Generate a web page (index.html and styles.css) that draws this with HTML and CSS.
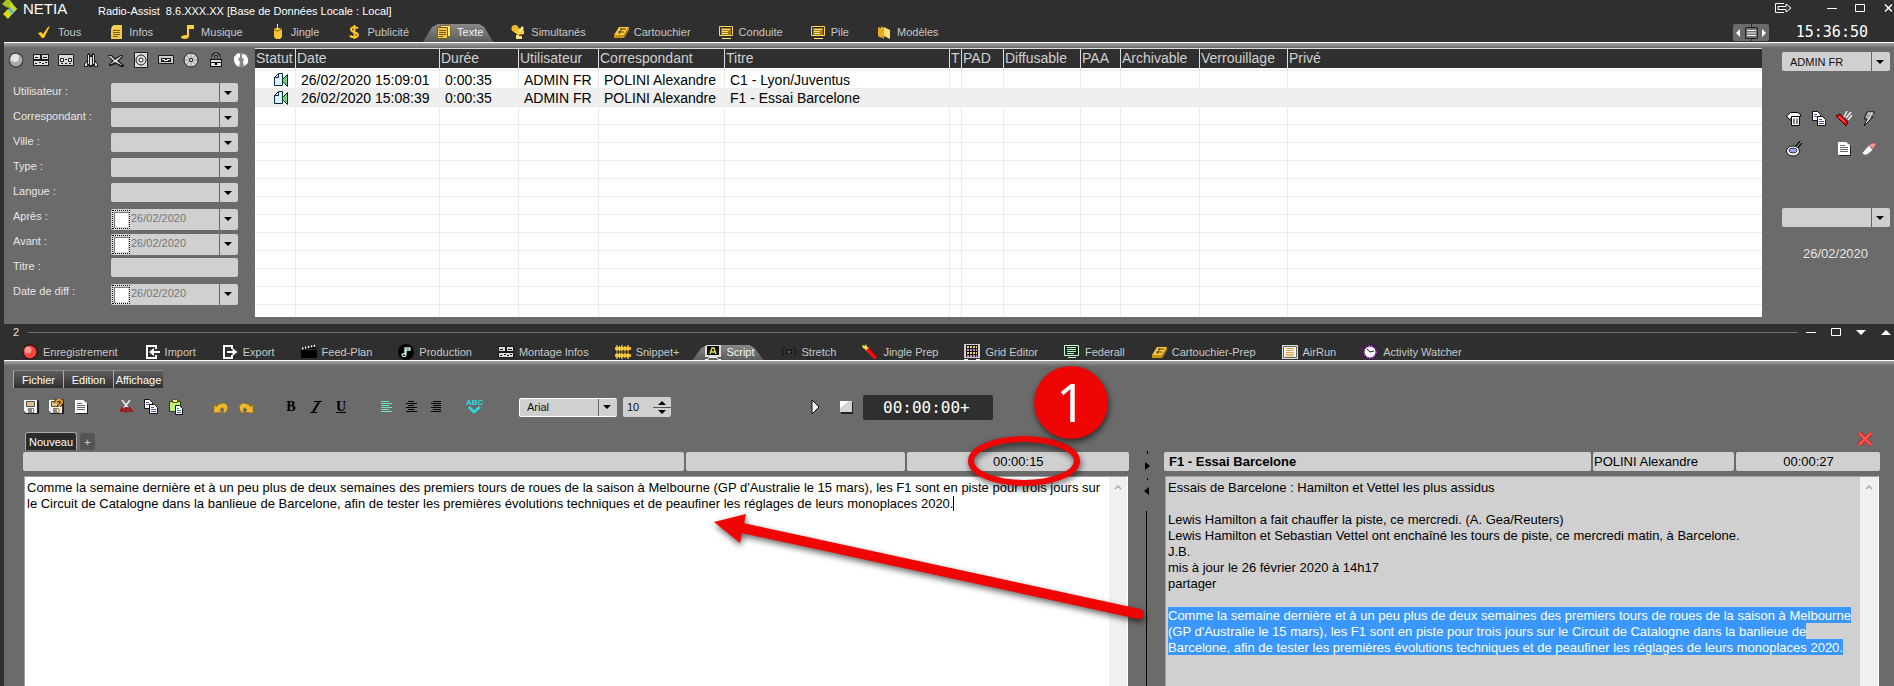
FILE: index.html
```
<!DOCTYPE html>
<html lang="fr">
<head>
  <meta charset="UTF-8" />
  <meta name="viewport" content="width=device-width, initial-scale=1.0"/>
  <title>Netia - Radio-Assist</title>
  <link rel="stylesheet" href="styles.css">
</head>
<body>

<!-- Icon sprite -->
<svg class="sprite" aria-hidden="true">
  <symbol id="i-check" viewBox="0 0 16 16"><path d="M1 9l4 5h2l6-12-2 1-5 7-2-2z" fill="#ffc726"/></symbol>
  <symbol id="i-sheet" viewBox="0 0 16 16"><path d="M6 1h8v14H3V5z" fill="#f4c945"/><path d="M3 4l3-3v3z" fill="#ffe89a"/><path d="M5 6.500h7M5 8.500h7M5 10.500h7M5 12.500h5" stroke="#7a5c10"/></symbol>
  <symbol id="i-note" viewBox="0 0 16 16"><path d="M7 1h7v4H9v7c0 2-2 3-4 3s-4-1-4-2 2-2 6-2z" fill="#ffcf3f"/></symbol>
  <symbol id="i-candle" viewBox="0 0 16 16"><path d="M7 0h1v4h-1z" fill="#ffe89a"/><path d="M4 5l2-1h3l3 1v8l-2 2H6l-2-2z" fill="#f7c52d"/><path d="M4 6l4 1 4-2" stroke="#8a6a10" fill="none"/></symbol>
  <symbol id="i-dollar" viewBox="0 0 16 16"><path d="M12 4.500C11 3 5 2.500 5 5.500S12 8 12 11s-7 2.500-8 .5M8.500 1v14" stroke="#ffc726" stroke-width="2" fill="none"/></symbol>
  <symbol id="i-sheets" viewBox="0 0 16 16"><path d="M4.500 1.500h10v11h-10z" fill="#ffe9a0" stroke="#8a6a10"/><path d="M1.500 3.500h10v11h-10z" fill="#f2c540" stroke="#7a5c10"/><path d="M3 6.500h7M3 8.500h7M3 10.500h7M3 12.500h4" stroke="#7a5c10"/></symbol>
  <symbol id="i-dish" viewBox="0 0 16 16"><path d="M4 5l8-1 2 3v3l-6 1-4-3z" fill="#ffcf3f"/><circle cx="5" cy="4.500" r="3.500" fill="#f0bb28"/><path d="M12 2l2 2-4 4-1-1z" fill="#fff0a0"/><path d="M6 11h3v1h3v3H6z" fill="#ffe07a"/></symbol>
  <symbol id="i-cart" viewBox="0 0 16 16"><path d="M6 3h10l-5 8H1z" fill="#f7c845"/><path d="M1 11h10l5-8v3l-5 8H1z" fill="#c98d10"/><path d="M7 5h6M5 8h6M9 4l-3 6" stroke="#5a4008"/></symbol>
  <symbol id="i-screen" viewBox="0 0 16 16"><path d="M1.500 2.500h13v9h-13z" fill="none" stroke="#ffd95a"/><path d="M3 4h10v7H3z" fill="#a27a16"/><path d="M4 5.500h8M4 7.500h6M4 9.500h6M4 14.500h9" stroke="#ffe07a"/></symbol>
  <symbol id="i-books" viewBox="0 0 16 16"><path d="M2 3l3 1v10l-3-2zM5 2l3 2v11l-3-2z" fill="#e8a820"/><path d="M8 3l6 3v9l-6-3z" fill="#ffe07a"/></symbol>

  <symbol id="i-ball" viewBox="0 0 16 16"><circle cx="8" cy="8" r="7.500" fill="#333"/><circle cx="8" cy="8" r="6.500" fill="#aaa"/><circle cx="7" cy="6" r="4" fill="#e4e4e4"/></symbol>
  <symbol id="i-mixer" viewBox="0 0 16 16"><path d="M0 2h16v12H0z" fill="#1c1c1c"/><path d="M1 3h6v4H1zM9 3h6v4H9zM1 9h14v4H1z" fill="#dcdcdc"/><path d="M2 5.500h3M10 5.500h4M2 11.500h2M6 10.500h2M9 11.500h2M12 10.500h2" stroke="#1c1c1c"/></symbol>
  <symbol id="i-tape" viewBox="0 0 16 16"><path d="M0 3l1-1h14l1 1v11H0z" fill="#1c1c1c"/><path d="M1 3h14v10H1z" fill="#d8d8d8"/><path d="M2.500 6.500h3v3h-3zM10.500 6.500h3v3h-3z" fill="#fff" stroke="#1c1c1c"/><path d="M7 7.500h2M3 11.500h2M7 11.500h2M11 11.500h2" stroke="#1c1c1c"/></symbol>
  <symbol id="i-rocket" viewBox="0 0 16 16"><path d="M1 12l3-4V3l2-2 1 1 1 2 1-2 1-1 2 2v5l3 4v3h-3l-2-1-1 1H7l-1-1-2 1H1z" fill="#1c1c1c"/><path d="M5 3h1v9H5zM10 3h1v9h-1zM7 5h2v8H7zM2 12l2-2v4H2zM14 12l-2-2v4h2z" fill="#e4e4e4"/></symbol>
  <symbol id="i-plane" viewBox="0 0 16 16"><path d="M0 3l4 0 3 3 6-3h2v2l-4 4 5 4v2h-3l-5-3-5 2H1v-2l3-3z" fill="#1c1c1c"/><path d="M1 4h2l4 4 6-4h1l-5 5 5 4h-1l-6-3-4 2H2l4-3z" fill="#e4e4e4"/></symbol>
  <symbol id="i-speaker" viewBox="0 0 16 16"><path d="M1.500.5h13v15h-13z" fill="#dcdcdc" stroke="#222"/><circle cx="8" cy="8" r="5" fill="none" stroke="#222"/><circle cx="8" cy="8" r="2" fill="#fff" stroke="#222"/></symbol>
  <symbol id="i-deck" viewBox="0 0 16 16"><path d="M.5 3.500h15v8H.5z" fill="#ccc" stroke="#1c1c1c"/><path d="M3 6h10v4H3z" fill="#1c1c1c"/><path d="M4 7.500h3M9 7.500h3M6 8.500h4" stroke="#eee"/></symbol>
  <symbol id="i-disc" viewBox="0 0 16 16"><circle cx="8" cy="8" r="7" fill="#d4d4d4" stroke="#222"/><path d="M8 2v12M2 8h12M4 4l8 8M12 4l-8 8" stroke="#999"/><circle cx="8" cy="8" r="2" fill="#222"/><circle cx="8" cy="8" r="1" fill="#fff"/></symbol>
  <symbol id="i-lock" viewBox="0 0 16 16"><path d="M5 8V5c0-4 6-4 6 0v3" fill="none" stroke="#111" stroke-width="3"/><path d="M5 8V5c0-4 6-4 6 0v3" fill="none" stroke="#ccc"/><path d="M2 7h12v8H2z" fill="#111"/><path d="M3 8h10v2H3zM3 11h10v3H3z" fill="#dedede"/><path d="M7 10h2v3H7z"/></symbol>
  <symbol id="i-globe" viewBox="0 0 16 16"><circle cx="8" cy="8" r="7.500" fill="#888"/><path d="M1 5l4-4 2 1v3L5 7l2 3-1 5-3-2-2-4zM9 2l4 1 2 4v4l-4 3-1-4 1-3-2-1z" fill="#fff"/></symbol>
  <symbol id="i-status" viewBox="0 0 16 16"><path d="M1.500 5.500l4-4h4v12h-8z" fill="#d8f0ff" stroke="#0c2c40"/><path d="M5.500 2v3.500h-4" fill="none" stroke="#0c2c40"/><path d="M9.500 6.500h1l4-4v12l-4-4h-1z" fill="#78c888" stroke="#062c10"/></symbol>

  <symbol id="i-trash" viewBox="0 0 16 16"><path d="M5.500 5.500h8v9h-8z" fill="#fff" stroke="#000"/><path d="M.5 5l4-3.500h7l3 2v2h-9l-1 4z" fill="#fff" stroke="#000"/><path d="M8 7.500v5.500M11 7.500v5.500" stroke="#000"/></symbol>
  <symbol id="i-copy" viewBox="0 0 16 16"><path d="M1.500.5h5l3 3v6h-8z" fill="#fff" stroke="#111"/><path d="M3 3.500h3M3 5.500h5" stroke="#5050b0"/><path d="M6.500 5.500h5l3 3v6h-8z" fill="#fff" stroke="#111"/><path d="M8 8.500h3M8 10.500h5M8 12.500h5" stroke="#5050b0"/></symbol>
  <symbol id="i-knife" viewBox="0 0 16 16"><path d="M10 7l5-6M8 6l3-6M12 9l4-5" stroke="#eee" stroke-width="1.500"/><path d="M0 5l4-2 8 8-2 4z" fill="#e00c0c" stroke="#400"/><path d="M3 6l6 5" stroke="#ff8a8a"/></symbol>
  <symbol id="i-bolt" viewBox="0 0 16 16"><path d="M6 1h8L9 6h3L3 15l3-7H3z" fill="#aaa" stroke="#111"/><path d="M7 2h5L5 12" stroke="#eee" fill="none"/></symbol>
  <symbol id="i-search" viewBox="0 0 16 16"><path d="M10 7l5-6" stroke="#111" stroke-width="4"/><path d="M10 7l5-6" stroke="#bbb"/><ellipse cx="7" cy="10" rx="6.500" ry="5" fill="#fff" stroke="#111"/><ellipse cx="7" cy="9.500" rx="4" ry="2.500" fill="#9aa6e8" stroke="#334"/></symbol>
  <symbol id="i-doc" viewBox="0 0 16 16"><path d="M3 2h8l4 3v10H3z" fill="#222"/><path d="M2 1h8l4 3v10H2z" fill="#fff"/><path d="M4 4.500h5M4 6.500h8M4 8.500h8M4 10.500h8" stroke="#666"/></symbol>
  <symbol id="i-eraser" viewBox="0 0 16 16"><path d="M8 4l3-2h3l1 2-4 5z" fill="#f29a92" stroke="#a55"/><path d="M8 4l4 5-6 5H3l-2-2z" fill="#f6f6f6" stroke="#777"/></symbol>

  <symbol id="i-rec" viewBox="0 0 16 16"><circle cx="8" cy="8" r="7.500" fill="#2a0606"/><circle cx="8" cy="8" r="6.500" fill="#f0443c"/><circle cx="6" cy="6" r="3.500" fill="#ff9a90"/></symbol>
  <symbol id="i-import" viewBox="0 0 16 16"><path d="M12 5V2H3v12h9v-3" fill="none" stroke="#fff" stroke-width="2"/><path d="M7 8h9" stroke="#fff" stroke-width="2"/><path d="M5 8l5-4v8z" fill="#fff"/></symbol>
  <symbol id="i-export" viewBox="0 0 16 16"><path d="M10 5V2H2v12h8v-3" fill="none" stroke="#fff" stroke-width="2"/><path d="M5 8h7" stroke="#fff" stroke-width="2"/><path d="M15.500 8l-5-4v8z" fill="#fff"/></symbol>
  <symbol id="i-clap" viewBox="0 0 16 16"><path d="M0 6h16v8H0z"/><path d="M1 4l14-2v3H1z"/><path d="M1 4.500l14-3" stroke="#fff" stroke-width="2" stroke-dasharray="1.500 1.500"/></symbol>
  <symbol id="i-prod" viewBox="0 0 16 16"><circle cx="8" cy="8" r="8"/><path d="M7 4h5v2H8v5c0 2-4 2-4 0s3-1 3-1z" fill="none" stroke="#c8f0dc" stroke-width="1.300"/></symbol>
  <symbol id="i-snippet" viewBox="0 0 16 16"><path d="M0 4.500h16M0 11.500h16" stroke="#f0b92c" stroke-width="3"/><path d="M2 1v14M4.500 2v12M7 1v14M10 2v12M13 1v14" stroke="#ffd24a" stroke-width="1.300"/><path d="M0 8h16" stroke="#3a2c08"/></symbol>
  <symbol id="i-script" viewBox="0 0 16 16"><path d="M0 0h16v13H0z" fill="#ddd"/><path d="M2 2h12v9H2z" fill="#111"/><path d="M5 10l2-6h2l2 6M6 8h4" fill="none" stroke="#e6e04a" stroke-width="1.300"/><path d="M0 15.500h3l1-2h8l1 2h3" stroke="#eee" fill="none"/></symbol>
  <symbol id="i-stretch" viewBox="0 0 16 16"><path d="M3 4l-2 4 2 4M13 4l2 4-2 4M6 5v6M10 5v6M8 6v1M8 9v1" fill="none" stroke="#0c0c0c" stroke-width="1.300" stroke-dasharray="2 1"/><path d="M7 8h2" stroke="#999"/></symbol>
  <symbol id="i-marker" viewBox="0 0 16 16"><path d="M4 4l3-1 8 9-1 3-2 0-8-8z" fill="#e81410"/><path d="M7 4l8 9" stroke="#600"/><path d="M0 1l3 1 1-2 1 3 2 1-2 1-1 2-1-2-2-1z" fill="#ffe640"/></symbol>
  <symbol id="i-grid" viewBox="0 0 16 16"><path d="M0 0h16v14H0z" fill="#d0d0d0"/><path d="M2 1h12v12H2z" fill="#111"/><path d="M3 3h10M3 9h10" stroke="#e8e060" stroke-width="2" stroke-dasharray="2 1"/><path d="M3 6h10M3 12h10" stroke="#d89ac0" stroke-width="2" stroke-dasharray="2 1"/><path d="M0 15.500h4M12 15.500h4" stroke="#eee"/></symbol>
  <symbol id="i-fed" viewBox="0 0 16 16"><path d="M.5 1.500h14v10H.5z" fill="#143018" stroke="#d8f4dc"/><path d="M3 3.500h9M3 5.500h9M3 7.500h9M3 9.500h7M4 13.500h8" stroke="#bdf0c4"/></symbol>
  <symbol id="i-airrun" viewBox="0 0 16 16"><path d="M0 1h16v14H0z" fill="#ddd"/><path d="M1.500 2.500h13v11h-13z" fill="#fff" stroke="#666"/><path d="M4 4.500h8M4 6.500h8M4 8.500h8M4 10.500h8M4 12h8" stroke="#e89a3c"/></symbol>
  <symbol id="i-watch" viewBox="0 0 16 16"><circle cx="8" cy="8" r="7.500" fill="#3a0c4a"/><circle cx="8" cy="8" r="6.300" fill="none" stroke="#c050e0" stroke-dasharray="2 1"/><circle cx="8" cy="8" r="5.500" fill="#f4f4ff"/><path d="M5 5l3 3 4-1" stroke="#222" fill="none"/></symbol>

  <symbol id="i-save" viewBox="0 0 16 16"><path d="M1 1h14l1 2v12H3l-2-2z" fill="#222"/><path d="M1 1h13v13H3l-2-2z" fill="#f0f0f0"/><path d="M3.500 2.500h8v5h-8z" fill="#d9bf80" stroke="#555"/><path d="M5 9h6v5H5z" fill="#888"/><path d="M9 10h1v3H9z" fill="#fff"/></symbol>
  <symbol id="i-saveas" viewBox="0 0 16 16"><use href="#i-save"/><path d="M8 4c0-4 6-4 6-1 0 2-3 2-3 5" fill="none" stroke="#3a2606" stroke-width="4"/><path d="M8 4c0-4 6-4 6-1 0 2-3 2-3 5M11 10v3" fill="none" stroke="#f0a41c" stroke-width="2"/></symbol>
  <symbol id="i-cut" viewBox="0 0 16 16"><path d="M4 1l6 8M12 1L6 9" stroke="#eee" stroke-width="1.500"/><path d="M2 13l2-4 2 4M2 12h4M7 13V9h3v4M12 13V9l3 4M8 8v6" fill="none" stroke="#a01414" stroke-width="1.500"/></symbol>
  <symbol id="i-paste" viewBox="0 0 16 16"><path d="M1.500 2.500h11v10h-11z" fill="#bff070" stroke="#24400c"/><path d="M4.500.5h5v3h-5z" fill="#ffe860" stroke="#553"/><path d="M7.500 6.500h4l3 3v6h-7z" fill="#fff" stroke="#111"/><path d="M9 9.500h2M9 11.500h4M9 13.500h4" stroke="#3a8ac0"/></symbol>
  <symbol id="i-undo" viewBox="0 0 16 16"><path d="M1 5v9l8-1-2-2c2-4 5-2 3 3h2c6-6 1-13-7-8L3 8z" fill="#edb62c" stroke="#8a6410" stroke-width=".5"/></symbol>
  <symbol id="i-spell" viewBox="0 0 16 16"><path d="M3 8l5 5 6-5" fill="none" stroke="#28dce4" stroke-width="2.500"/></symbol>
  <symbol id="i-italic" viewBox="0 0 16 16"><path d="M6 2.500h8M2 13.500h7" stroke="#000"/><path d="M11 3L5 13" stroke="#000" stroke-width="2"/></symbol>
  <symbol id="i-left" viewBox="0 0 16 16"><path d="M3 2.500h8M3 4.500h11M3 6.500h8M3 8.500h11M3 10.500h8M3 12.500h11" stroke="currentColor"/></symbol>
  <symbol id="i-center" viewBox="0 0 16 16"><path d="M5 2.500h6M3 4.500h11M5 6.500h6M3 8.500h11M5 10.500h6M3 12.500h11" stroke="currentColor"/></symbol>
  <symbol id="i-right" viewBox="0 0 16 16"><path d="M5 2.500h8M3 4.500h10M5 6.500h8M3 8.500h10M5 10.500h8M3 12.500h10" stroke="currentColor"/></symbol>
  <symbol id="i-play" viewBox="0 0 16 16"><path d="M4 1l7 7-7 7z" fill="#f4f4f4" stroke="#111"/></symbol>
  <symbol id="i-stop" viewBox="0 0 16 16"><path d="M3 3h12v12H3z" fill="#222"/><path d="M2 2h12v11H2z" fill="#d4d4d4"/><path d="M2 2h9L2 9z" fill="#fff"/></symbol>
  <symbol id="i-cross" viewBox="0 0 16 16"><path d="M2 2l12 12M14 2L2 14" stroke="#b02020" stroke-width="4.500"/><path d="M2 2l12 12M14 2L2 14" stroke="#f4554c" stroke-width="3"/></symbol>

  <symbol id="i-exit" viewBox="0 0 18 12"><path d="M10 1.500H1.500v9H10M4 4.500h8V2l5 4-5 4V7.500H4z" fill="none" stroke="#fff"/></symbol>
  <symbol id="i-min" viewBox="0 0 12 12"><path d="M1 6.500h10" stroke="#fff"/></symbol>
  <symbol id="i-max" viewBox="0 0 12 12"><path d="M1.500 2.500h9v7h-9z" fill="none" stroke="#fff"/></symbol>
  <symbol id="i-close" viewBox="0 0 12 12"><path d="M3 2.500l7 7M10 2.500l-7 7" stroke="#fff" stroke-width="1.500"/></symbol>
  <symbol id="i-down" viewBox="0 0 12 12"><path d="M1 4h10L6 9z" fill="#fff"/></symbol>
  <symbol id="i-up" viewBox="0 0 12 12"><path d="M1 9h10L6 4z" fill="#fff"/></symbol>
  <symbol id="i-chevron" viewBox="0 0 12 12"><path d="M3 8l3-3 3 3" fill="none" stroke="#aaa" stroke-width="1.500"/></symbol>
</svg>

<section class="browser">
  <header class="titlebar">
    <svg class="logo" viewBox="0 0 16 20"><path d="M1 4l4-4h4l3 4-4 4-3-1z" fill="#a9c51c"/><path d="M8 8l3-4 5 5-5 6-4-5z" fill="#58b7c4"/><path d="M10 2l6 7-3 3-5-6z" fill="#c8d830"/><path d="M2 14l5-5 4 5-4 5z" fill="#d3dd22"/></svg>
    <span class="brand">NETIA</span>
    <h1 class="title">Radio-Assist  8.6.XXX.XX [Base de Données Locale : Local]</h1>
    <div class="window-buttons">
      <button class="icon-btn exit" aria-label="Quitter"><svg><use href="#i-exit"/></svg></button>
      <button class="icon-btn" aria-label="Réduire"><svg><use href="#i-min"/></svg></button>
      <button class="icon-btn" aria-label="Agrandir"><svg><use href="#i-max"/></svg></button>
      <button class="icon-btn" aria-label="Fermer"><svg><use href="#i-close"/></svg></button>
    </div>
  </header>

  <nav class="tabs">
    <button class="tab"><svg><use href="#i-check"/></svg>Tous</button>
    <button class="tab"><svg><use href="#i-sheet"/></svg>Infos</button>
    <button class="tab"><svg><use href="#i-note"/></svg>Musique</button>
    <button class="tab"><svg><use href="#i-candle"/></svg>Jingle</button>
    <button class="tab"><svg><use href="#i-dollar"/></svg>Publicité</button>
    <button class="tab active"><svg><use href="#i-sheets"/></svg>Texte</button>
    <button class="tab"><svg><use href="#i-dish"/></svg>Simultanés</button>
    <button class="tab"><svg><use href="#i-cart"/></svg>Cartouchier</button>
    <button class="tab"><svg><use href="#i-screen"/></svg>Conduite</button>
    <button class="tab"><svg><use href="#i-screen"/></svg>Pile</button>
    <button class="tab"><svg><use href="#i-books"/></svg>Modèles</button>
    <div class="clock-area">
      <button class="pager" aria-label="Défilement"><svg viewBox="0 0 36 17"><path d="M0 2q0-2 2-2h32q2 0 2 2v13q0 2-2 2H2q-2 0-2-2z" fill="#6b6b6b"/><path d="M7 5v8L3 9zM29 5v8l4-4z" fill="#fff"/><path d="M18.500 0v17" stroke="#333"/><path d="M12.500 3.500h12v11h-12z" fill="#6b6b6b" stroke="#222"/><path d="M14 6.500h9M14 9h9M14 11.500h9" stroke="#fff"/></svg></button>
      <time class="clock">15:36:50</time>
    </div>
  </nav>

  <div class="panel browser-panel">
    <form class="filters">
      <div class="filter-icons">
        <svg><use href="#i-ball"/></svg>
        <svg><use href="#i-mixer"/></svg>
        <svg><use href="#i-tape"/></svg>
        <svg><use href="#i-rocket"/></svg>
        <svg><use href="#i-plane"/></svg>
        <svg><use href="#i-speaker"/></svg>
        <svg><use href="#i-deck"/></svg>
        <svg><use href="#i-disc"/></svg>
        <svg><use href="#i-lock"/></svg>
        <svg><use href="#i-globe"/></svg>
      </div>
      <div class="filter-row"><label for="utilisateur">Utilisateur :</label><select id="utilisateur" class="field combo"></select></div>
      <div class="filter-row"><label for="correspondant">Correspondant :</label><select id="correspondant" class="field combo"></select></div>
      <div class="filter-row"><label for="ville">Ville :</label><select id="ville" class="field combo"></select></div>
      <div class="filter-row"><label for="type">Type :</label><select id="type" class="field combo"></select></div>
      <div class="filter-row"><label for="langue">Langue :</label><select id="langue" class="field combo"></select></div>
      <div class="filter-row"><label for="apres">Après :</label>
        <div class="field combo date"><input type="checkbox" aria-label="Activer Après"><input type="text" id="apres" value="26/02/2020"></div></div>
      <div class="filter-row"><label for="avant">Avant :</label>
        <div class="field combo date"><input type="checkbox" aria-label="Activer Avant"><input type="text" id="avant" value="26/02/2020"></div></div>
      <div class="filter-row"><label for="titre">Titre :</label><input type="text" id="titre" class="field"></div>
      <div class="filter-row"><label for="diff">Date de diff :</label>
        <div class="field combo date"><input type="checkbox" aria-label="Activer Date de diff"><input type="text" id="diff" value="26/02/2020"></div></div>
    </form>

    <div class="table-wrap">
      <table class="items">
        <colgroup>
          <col class="c-statut"><col class="c-date"><col class="c-duree"><col class="c-user"><col class="c-corr"><col class="c-titre"><col class="c-t"><col class="c-pad"><col class="c-diff"><col class="c-paa"><col class="c-arch"><col class="c-verr"><col>
        </colgroup>
        <thead>
          <tr><th>Statut</th><th>Date</th><th>Durée</th><th>Utilisateur</th><th>Correspondant</th><th>Titre</th><th>T</th><th>PAD</th><th>Diffusable</th><th>PAA</th><th>Archivable</th><th>Verrouillage</th><th>Privé</th></tr>
        </thead>
        <tbody>
          <tr><td class="status"><svg><use href="#i-status"/></svg></td><td>26/02/2020 15:09:01</td><td>0:00:35</td><td>ADMIN FR</td><td>POLINI Alexandre</td><td>C1 - Lyon/Juventus</td><td></td><td></td><td></td><td></td><td></td><td></td><td></td></tr>
          <tr class="current"><td class="status"><svg><use href="#i-status"/></svg></td><td>26/02/2020 15:08:39</td><td>0:00:35</td><td>ADMIN FR</td><td>POLINI Alexandre</td><td>F1 - Essai Barcelone</td><td></td><td></td><td></td><td></td><td></td><td></td><td></td></tr>
          <tr><td></td><td></td><td></td><td></td><td></td><td></td><td></td><td></td><td></td><td></td><td></td><td></td><td></td></tr>
          <tr><td></td><td></td><td></td><td></td><td></td><td></td><td></td><td></td><td></td><td></td><td></td><td></td><td></td></tr>
          <tr><td></td><td></td><td></td><td></td><td></td><td></td><td></td><td></td><td></td><td></td><td></td><td></td><td></td></tr>
          <tr><td></td><td></td><td></td><td></td><td></td><td></td><td></td><td></td><td></td><td></td><td></td><td></td><td></td></tr>
          <tr><td></td><td></td><td></td><td></td><td></td><td></td><td></td><td></td><td></td><td></td><td></td><td></td><td></td></tr>
          <tr><td></td><td></td><td></td><td></td><td></td><td></td><td></td><td></td><td></td><td></td><td></td><td></td><td></td></tr>
          <tr><td></td><td></td><td></td><td></td><td></td><td></td><td></td><td></td><td></td><td></td><td></td><td></td><td></td></tr>
          <tr><td></td><td></td><td></td><td></td><td></td><td></td><td></td><td></td><td></td><td></td><td></td><td></td><td></td></tr>
          <tr><td></td><td></td><td></td><td></td><td></td><td></td><td></td><td></td><td></td><td></td><td></td><td></td><td></td></tr>
          <tr><td></td><td></td><td></td><td></td><td></td><td></td><td></td><td></td><td></td><td></td><td></td><td></td><td></td></tr>
          <tr><td></td><td></td><td></td><td></td><td></td><td></td><td></td><td></td><td></td><td></td><td></td><td></td><td></td></tr>
          <tr><td></td><td></td><td></td><td></td><td></td><td></td><td></td><td></td><td></td><td></td><td></td><td></td><td></td></tr>
        </tbody>
      </table>
    </div>

    <aside class="side">
      <select class="field combo" aria-label="Utilisateur connecté"><option>ADMIN FR</option></select>
      <div class="side-tools">
        <button class="icon-btn" aria-label="Supprimer"><svg><use href="#i-trash"/></svg></button>
        <button class="icon-btn" aria-label="Copier"><svg><use href="#i-copy"/></svg></button>
        <button class="icon-btn" aria-label="Outils"><svg><use href="#i-knife"/></svg></button>
        <button class="icon-btn" aria-label="Envoyer"><svg><use href="#i-bolt"/></svg></button>
        <button class="icon-btn" aria-label="Rechercher"><svg><use href="#i-search"/></svg></button>
        <span></span>
        <button class="icon-btn" aria-label="Fiche"><svg><use href="#i-doc"/></svg></button>
        <button class="icon-btn" aria-label="Effacer"><svg><use href="#i-eraser"/></svg></button>
      </div>
      <select class="field combo" aria-label="Filtre"></select>
      <time class="side-date">26/02/2020</time>
    </aside>
  </div>
</section>

<section class="workspace">
  <div class="separator">
    <span>2</span>
    <hr>
    <div class="window-buttons">
      <button class="icon-btn" aria-label="Réduire"><svg><use href="#i-min"/></svg></button>
      <button class="icon-btn" aria-label="Agrandir"><svg><use href="#i-max"/></svg></button>
      <button class="icon-btn" aria-label="Descendre"><svg><use href="#i-down"/></svg></button>
      <button class="icon-btn" aria-label="Monter"><svg><use href="#i-up"/></svg></button>
    </div>
  </div>

  <nav class="tabs modules">
    <button class="tab"><svg><use href="#i-rec"/></svg>Enregistrement</button>
    <button class="tab"><svg><use href="#i-import"/></svg>Import</button>
    <button class="tab"><svg><use href="#i-export"/></svg>Export</button>
    <button class="tab"><svg><use href="#i-clap"/></svg>Feed-Plan</button>
    <button class="tab"><svg><use href="#i-prod"/></svg>Production</button>
    <button class="tab"><svg><use href="#i-mixer"/></svg>Montage Infos</button>
    <button class="tab"><svg><use href="#i-snippet"/></svg>Snippet+</button>
    <button class="tab active"><svg><use href="#i-script"/></svg>Script</button>
    <button class="tab"><svg><use href="#i-stretch"/></svg>Stretch</button>
    <button class="tab"><svg><use href="#i-marker"/></svg>Jingle Prep</button>
    <button class="tab"><svg><use href="#i-grid"/></svg>Grid Editor</button>
    <button class="tab"><svg><use href="#i-fed"/></svg>Federall</button>
    <button class="tab"><svg><use href="#i-cart"/></svg>Cartouchier-Prep</button>
    <button class="tab"><svg><use href="#i-airrun"/></svg>AirRun</button>
    <button class="tab"><svg><use href="#i-watch"/></svg>Activity Watcher</button>
  </nav>

  <div class="panel script-panel">
    <div class="menubar">
      <button>Fichier</button>
      <button>Edition</button>
      <button>Affichage</button>
    </div>

    <div class="toolbar">
      <div class="tool-group">
        <button class="icon-btn" aria-label="Enregistrer"><svg><use href="#i-save"/></svg></button>
        <button class="icon-btn" aria-label="Enregistrer sous"><svg><use href="#i-saveas"/></svg></button>
        <button class="icon-btn" aria-label="Document"><svg><use href="#i-doc"/></svg></button>
      </div>
      <div class="tool-group">
        <button class="icon-btn" aria-label="Couper"><svg><use href="#i-cut"/></svg></button>
        <button class="icon-btn" aria-label="Copier"><svg><use href="#i-copy"/></svg></button>
        <button class="icon-btn" aria-label="Coller"><svg><use href="#i-paste"/></svg></button>
      </div>
      <div class="tool-group">
        <button class="icon-btn" aria-label="Annuler"><svg><use href="#i-undo"/></svg></button>
        <button class="icon-btn flip" aria-label="Rétablir"><svg><use href="#i-undo"/></svg></button>
      </div>
      <div class="tool-group letters">
        <button class="icon-btn">B</button>
        <button class="icon-btn" aria-label="Italique"><svg><use href="#i-italic"/></svg></button>
        <button class="icon-btn underline">U</button>
      </div>
      <div class="tool-group">
        <button class="icon-btn on" aria-label="Gauche"><svg><use href="#i-left"/></svg></button>
        <button class="icon-btn" aria-label="Centre"><svg><use href="#i-center"/></svg></button>
        <button class="icon-btn" aria-label="Droite"><svg><use href="#i-right"/></svg></button>
      </div>
      <button class="icon-btn spell"><span>ABC</span><svg><use href="#i-spell"/></svg></button>
      <select class="field combo font-name" aria-label="Police"><option>Arial</option></select>
      <input type="text" class="field font-size" aria-label="Taille" value="10">
      <div class="transport">
        <button class="icon-btn" aria-label="Lecture"><svg><use href="#i-play"/></svg></button>
        <button class="icon-btn" aria-label="Stop"><svg><use href="#i-stop"/></svg></button>
        <output class="counter">00:00:00+</output>
      </div>
    </div>

    <div class="panes">
      <div class="pane pane-edit">
        <div class="pane-tabs">
          <button class="doc-tab">Nouveau</button>
          <button class="add-tab">+</button>
        </div>
        <div class="info-bar">
          <div class="cell"></div>
          <div class="cell"></div>
          <div class="cell time">00:00:15</div>
        </div>
        <div class="editor">
          <textarea aria-label="Texte" spellcheck="false">Comme la semaine dernière et à un peu plus de deux semaines des premiers tours de roues de la saison à Melbourne (GP d'Australie le 15 mars), les F1 sont en piste pour trois jours sur le Circuit de Catalogne dans la banlieue de Barcelone, afin de tester les premières évolutions techniques et de peaufiner les réglages de leurs monoplaces 2020.</textarea>
          <div class="scroll"><svg><use href="#i-chevron"/></svg></div>
          <i class="caret"></i>
        </div>
      </div>

      <div class="splitter">
        <svg viewBox="0 0 12 60"><path d="M6.500 0v3M6.500 27v2" stroke="#000"/><path d="M4 11l5 4-5 4zM8 36l-5 4 5 4z"/></svg>
      </div>

      <div class="pane pane-source">
        <div class="pane-tabs">
          <button class="icon-btn" aria-label="Fermer le texte"><svg><use href="#i-cross"/></svg></button>
        </div>
        <div class="info-bar">
          <div class="cell name">F1 - Essai Barcelone</div>
          <div class="cell">POLINI Alexandre</div>
          <div class="cell time">00:00:27</div>
        </div>
        <div class="editor">
          <article class="source">
            <p>Essais de Barcelone : Hamilton et Vettel les plus assidus</p>
            <p>Lewis Hamilton a fait chauffer la piste, ce mercredi. (A. Gea/Reuters)<br>
            Lewis Hamilton et Sebastian Vettel ont enchaîné les tours de piste, ce mercredi matin, à Barcelone.<br>
            J.B.<br>
            mis à jour le 26 février 2020 à 14h17<br>
            partager</p>
            <p><mark>Comme la semaine dernière et à un peu plus de deux semaines des premiers tours de roues de la saison à Melbourne (GP d'Australie le 15 mars), les F1 sont en piste pour trois jours sur le Circuit de Catalogne dans la banlieue de Barcelone, afin de tester les premières évolutions techniques et de peaufiner les réglages de leurs monoplaces 2020.</mark></p>
          </article>
          <div class="scroll"><svg><use href="#i-chevron"/></svg></div>
        </div>
      </div>
    </div>
  </div>

  <!-- Callouts over the editor -->
  <svg class="arrow" viewBox="0 0 440 110">
    <path d="M36 14L433 100" stroke="#f00505" stroke-width="10" stroke-linecap="round"/>
    <path d="M8 8l32-8-6 29z" fill="#f00505"/>
  </svg>
  <svg class="ring" viewBox="0 0 112 50"><ellipse cx="56" cy="25" rx="53" ry="22" fill="none" stroke="#f00505" stroke-width="6"/></svg>
  <div class="step">1</div>
</section>

</body>
</html>
```
FILE: styles.css
```
* {
  margin: 0; padding: 0; box-sizing: border-box;
}

body {
  font-family: "Liberation Sans", Arial, sans-serif;
  font-size: 11px;
  line-height: 14px;
  background: #2f2f2f;
  color: #e6e6e6;
  height: 100vh;
  overflow: hidden;
  display: flex;
  flex-direction: column;
}

button, input, select, textarea {
  font: inherit;
  color: inherit;
  border: none;
  background: none;
  outline: none;
}

.sprite {
  position: absolute;
  width: 0;
  height: 0;
}

.icon-btn {
  display: block;
  width: 16px;
  height: 16px;
}

.icon-btn svg,
.tab svg,
.filter-icons svg,
.status svg {
  display: block;
  width: 16px;
  height: 16px;
}

/* Title bar */
.titlebar {
  display: flex;
  align-items: center;
  height: 22px;
  color: #fff;
}

.logo {
  width: 16px;
  height: 20px;
  margin: 0 6px 2px 1px;
}

.brand {
  width: 75px;
  font-size: 15px;
  padding-bottom: 4px;
}

.title {
  font-size: 11px;
  font-weight: normal;
  white-space: pre;
}

.window-buttons {
  display: flex;
  align-items: center;
  gap: 13px;
  margin-left: auto;
}

.window-buttons .icon-btn,
.window-buttons svg {
  width: 12px;
  height: 12px;
}

.titlebar .window-buttons {
  gap: 16px;
  padding-bottom: 6px;
}

.window-buttons .exit,
.window-buttons .exit svg {
  width: 18px;
}

.window-buttons .exit {
  margin-right: 18px;
}

/* Tabs */
.tabs {
  display: flex;
  height: 20px;
  padding-left: 24px;
}

.tab {
  display: flex;
  align-items: center;
  gap: 5px;
  padding: 0 14px 0 13px;
  color: #c8c8c8;
  white-space: nowrap;
}

.tab.active {
  color: #f4f4f4;
  background: linear-gradient(#8e8e8e, #5c5c5c);
  clip-path: polygon(0 100%, 9px 5px, 15px 2px, calc(100% - 18px) 2px, calc(100% - 13px) 5px, calc(100% - 4px) 100%);
}

.modules {
  padding: 3px 0 0 9px;
}

.modules .tab {
  padding-right: 13px;
}

.clock-area {
  display: flex;
  align-items: center;
  gap: 27px;
  margin-left: auto;
  padding-right: 26px;
}

.pager, .pager svg {
  display: block;
  width: 36px;
  height: 17px;
}

.clock, .counter {
  font-family: "DejaVu Sans Mono", monospace;
  font-size: 15px;
  color: #fff;
}

.panel {
  margin-left: 4px;
  background: linear-gradient(#fff 1px, #a4a4a4 1px, #6b6b6b 6px);
}

.browser-panel {
  display: flex;
  padding: 6px 0 7px;
}

/* Filters */
.filters {
  width: 251px;
  padding: 4px 0 0 4px;
}

.filter-icons {
  display: flex;
  gap: 9px;
  margin-bottom: 12px;
}

.filter-row {
  display: flex;
  align-items: center;
  height: 25px;
  padding-left: 5px;
}

.filter-row label {
  width: 98px;
  padding-bottom: 3px;
}

.field {
  width: 127px;
  height: 19px;
  border-radius: 2px;
  background: #d0d0d0;
  color: #111;
}

.combo {
  appearance: none;
  padding-left: 8px;
  background:
    url("data:image/svg+xml,%3Csvg xmlns='http://www.w3.org/2000/svg' width='8' height='4'%3E%3Cpath d='M0 0h8L4 4z'/%3E%3C/svg%3E") right 6px center no-repeat,
    linear-gradient(#666, #666) right 18px center / 1px 100% no-repeat,
    #d0d0d0;
}

.date {
  display: flex;
  align-items: center;
  height: 21px;
  margin-top: 3px;
  padding-left: 1px;
}

.date input[type="checkbox"] {
  appearance: none;
  width: 18px;
  height: 19px;
  border: 1px dotted #000;
  background: #fff;
  box-shadow: inset 1px 1px #d0d0d0, inset 2px 2px #777, inset -1px -1px #d0d0d0;
}

.date input[type="text"] {
  width: 80px;
  padding: 0 0 2px 1px;
  color: #777;
}

/* Items table */
.table-wrap {
  flex: 1;
  height: 269px;
  overflow: hidden;
  background: #fff;
}

.items {
  width: 100%;
  table-layout: fixed;
  border-collapse: separate;
  border-spacing: 0;
  font-size: 14px;
  line-height: 16px;
  color: #000;
}

.items th {
  height: 23px;
  padding: 0 0 3px 1px;
  border-left: 1px solid #ddd;
  background: linear-gradient(#ddd 1px, #2f2f2f 1px 20px, #fff 20px 22px, #ececec 22px);
  color: #d0d0d0;
  font-weight: normal;
  text-align: left;
  white-space: nowrap;
}

.items td {
  height: 18px;
  padding: 1px 0 0 5px;
  border-left: 1px solid #ececec;
  border-bottom: 1px solid #ececec;
  white-space: nowrap;
}

.items th:first-child,
.items td:first-child {
  border-left: none;
}

.items .current td {
  background: #efefef;
}

.items .status {
  padding-left: 18px;
}

.c-statut { width: 40px; }
.c-date { width: 144px; }
.c-duree { width: 79px; }
.c-user { width: 80px; }
.c-corr { width: 126px; }
.c-titre { width: 225px; }
.c-t { width: 12px; }
.c-pad { width: 42px; }
.c-diff { width: 77px; }
.c-paa { width: 40px; }
.c-arch { width: 79px; }
.c-verr { width: 88px; }

/* Right side */
.side {
  display: flex;
  flex-direction: column;
  width: 132px;
  padding: 4px 4px 0 20px;
}

.side .field {
  width: 100%;
}

.side-tools {
  display: grid;
  grid-template-columns: repeat(4, 16px);
  gap: 14px 9px;
  margin: 40px 0 51px 4px;
}

.side-date {
  margin: 20px 0 0 21px;
  font-size: 13px;
}

/* Workspace */
.workspace {
  flex: 1;
  position: relative;
  display: flex;
  flex-direction: column;
  min-height: 0;
}

.separator {
  display: flex;
  align-items: center;
  height: 16px;
  padding: 0 2px 0 13px;
}

.separator span {
  width: 15px;
}

.separator hr {
  flex: 1;
  border: none;
  border-top: 1px solid #707070;
}

.separator .window-buttons {
  margin-left: 7px;
}

.script-panel {
  flex: 1;
  display: flex;
  flex-direction: column;
  min-height: 0;
  padding: 10px 14px 0 19px;
}

.menubar {
  display: flex;
  margin-left: -10px;
}

.menubar button {
  width: 50px;
  height: 18px;
  border-left: 1px solid #aaa;
  border-top: 1px solid #888;
  background: linear-gradient(#5e5e5e, #303030);
  color: #fff;
}

.toolbar {
  display: flex;
  align-items: center;
  height: 26px;
  margin-top: 6px;
}

.tool-group {
  display: flex;
  gap: 9px;
  margin-right: 29px;
}

.letters {
  font: bold 14px/16px "Liberation Serif", serif;
  color: #000;
}

.underline { text-decoration: underline; }
.flip { transform: scaleX(-1); }
.toolbar .icon-btn { color: #000; }
.toolbar .on { color: #6fe0b4; }

.toolbar .spell {
  position: relative;
  width: 20px;
  margin-left: -7px;
  color: #28dce4;
  font-size: 8px;
  font-weight: bold;
  line-height: 8px;
}

.spell span {
  position: absolute;
  top: 0;
  left: 0;
}

.toolbar .font-name {
  width: 98px;
  margin: 0 6px 0 33px;
  background-position: right 6px center, right 18px center, 0 0;
  box-shadow: inset 1px 1px #fff, inset 0 -1px #fff;
}

.toolbar .font-size {
  width: 48px;
  height: 20px;
  padding-left: 4px;
  background:
    url("data:image/svg+xml,%3Csvg xmlns='http://www.w3.org/2000/svg' width='18' height='20'%3E%3Cpath d='M5 8h8L9 4zM5 13h8l-4 4z'/%3E%3Cpath d='M0 10.5h18' stroke='%23555'/%3E%3C/svg%3E") right center no-repeat,
    #d0d0d0;
}

.transport {
  display: flex;
  align-items: center;
  gap: 14px;
  margin-left: 137px;
}

.counter {
  width: 130px;
  height: 25px;
  margin-left: -5px;
  padding-left: 20px;
  border-radius: 2px;
  background: #2f2f2f;
  font-size: 16px;
  line-height: 25px;
}

/* Panes */
.panes {
  flex: 1;
  display: flex;
  min-height: 0;
  margin-top: 11px;
  font-size: 13px;
  line-height: 16px;
  color: #000;
}

.pane {
  display: flex;
  flex-direction: column;
  min-width: 0;
}

.pane-edit { flex: 1106 0 0; }
.pane-source { flex: 716 0 0; }

.pane-tabs {
  display: flex;
  align-items: flex-end;
  gap: 3px;
  height: 19px;
  padding-left: 2px;
  font-size: 11px;
}

.pane-source .pane-tabs {
  justify-content: flex-end;
  align-items: flex-start;
  padding-right: 7px;
}

.doc-tab {
  width: 52px;
  height: 18px;
  border: 1px solid #aaa;
  border-bottom: none;
  border-radius: 3px 3px 0 0;
  background: #2b2b2b;
  color: #fff;
}

.add-tab {
  width: 15px;
  height: 17px;
  border-radius: 3px 3px 0 0;
  background: #555;
  color: #ccc;
}

.info-bar {
  display: grid;
  grid-template-columns: 661fr 219fr 222fr;
  gap: 2px;
  margin-top: 2px;
}

.pane-source .info-bar {
  grid-template-columns: 427fr 141fr 144fr;
}

.cell {
  height: 19px;
  padding: 2px 0 0 1px;
  border-radius: 2px;
  background: #d0d0d0;
}

.name {
  padding-left: 5px;
  font-weight: bold;
}

.pane-source .time { text-align: center; }
.pane-edit .time { padding-left: 86px; }

.editor {
  flex: 1;
  position: relative;
  display: flex;
  margin: 5px 1px 0;
  border: 1px solid #a0a0a0;
  border-bottom: none;
  border-right-color: #fff;
  min-height: 0;
}

.editor textarea {
  flex: 1;
  padding: 3px 0 0 2px;
  resize: none;
  overflow: hidden;
  background: #fff;
  color: #000;
}

.source {
  flex: 1;
  padding: 3px 0 0 2px;
  overflow: hidden;
  background: #d0d0d0;
}

.source p {
  margin-bottom: 16px;
}

.source mark {
  padding: 1px 0 0;
  background: #3997fd;
  color: #fff;
}

.scroll {
  width: 18px;
  padding: 4px 3px;
  background: #f0f0f0;
}

.scroll svg {
  display: block;
  width: 12px;
  height: 12px;
}

.caret {
  position: absolute;
  left: 928px;
  top: 19px;
  width: 1px;
  height: 15px;
  background: #000;
}

.splitter {
  display: flex;
  flex-direction: column;
  align-items: center;
  width: 35px;
  padding-top: 20px;
}

.splitter svg {
  width: 12px;
  height: 60px;
}

.splitter::after {
  content: "";
  flex: 1;
  width: 1px;
  background: #000;
}

/* Callouts */
.arrow, .ring, .step {
  position: absolute;
  pointer-events: none;
  filter: drop-shadow(1px 3px 3px rgba(0, 0, 0, 0.6));
}

.arrow {
  left: 706px;
  top: 190px;
  width: 440px;
  height: 110px;
}

.ring {
  left: 968px;
  top: 112px;
  width: 112px;
  height: 50px;
}

.step {
  left: 1034px;
  top: 42px;
  width: 74px;
  height: 73px;
  border-radius: 50%;
  background: #f00505;
  color: #fff;
  font: 52px/72px "Noto Sans", sans-serif;
  text-align: center;
}
```
